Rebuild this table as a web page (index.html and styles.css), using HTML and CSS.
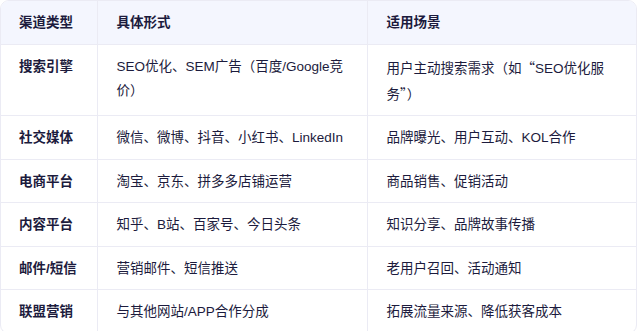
FILE: index.html
```html
<!DOCTYPE html>
<html lang="zh">
<head>
<meta charset="utf-8">
<link rel="stylesheet" href="styles.css">
</head>
<body>
<div class="wrap">
<table class="tbl">
<colgroup><col class="c1"><col class="c2"><col class="c3"></colgroup>
<thead>
<tr><th>渠道类型</th><th>具体形式</th><th>适用场景</th></tr>
</thead>
<tbody>
<tr><td class="k">搜索引擎</td><td>SEO优化、SEM广告（百度/Google竞价）</td><td>用户主动搜索需求（如<span class="q">“</span>SEO优化服务<span class="q">”</span>）</td></tr>
<tr><td class="k">社交媒体</td><td>微信、微博、抖音、小红书、LinkedIn</td><td>品牌曝光、用户互动、KOL合作</td></tr>
<tr><td class="k">电商平台</td><td>淘宝、京东、拼多多店铺运营</td><td>商品销售、促销活动</td></tr>
<tr><td class="k">内容平台</td><td>知乎、B站、百家号、今日头条</td><td>知识分享、品牌故事传播</td></tr>
<tr><td class="k">邮件/短信</td><td>营销邮件、短信推送</td><td>老用户召回、活动通知</td></tr>
<tr><td class="k">联盟营销</td><td>与其他网站/APP合作分成</td><td>拓展流量来源、降低获客成本</td></tr>
</tbody>
</table>
</div>
</body>
</html>
```
FILE: styles.css
```css
html, body {
  margin: 0;
  padding: 0;
  background: #ffffff;
}
body {
  font-family: "Liberation Sans", "Noto Sans CJK SC", sans-serif;
  color: #1c1b3d;
  font-size: 13.5px;
}
.wrap {
  width: 637px;
  border: 1px solid #ebebf4;
  border-radius: 9px;
  overflow: hidden;
  box-sizing: border-box;
}
.tbl {
  width: 100%;
  border-collapse: collapse;
  table-layout: fixed;
}
.c1 { width: 96px; }
.c2 { width: 270px; }
.tbl th, .tbl td {
  text-align: left;
  vertical-align: top;
  padding: 10px 14px 8.5px 19px;
  line-height: 24px;
  border-left: 1px solid #ebebf4;
  border-top: 1px solid #ebebf4;
}
.tbl th:nth-child(3), .tbl td:nth-child(3) { padding-right: 18px; }
.tbl th:first-child, .tbl td:first-child { border-left: none; padding-left: 18px; padding-right: 4px; }
.tbl thead th { border-top: none; background: #f4f6fe; font-weight: 700; }
.tbl td.k { font-weight: 700; }
.q { font-family: "Noto Sans CJK SC", sans-serif; }
```
